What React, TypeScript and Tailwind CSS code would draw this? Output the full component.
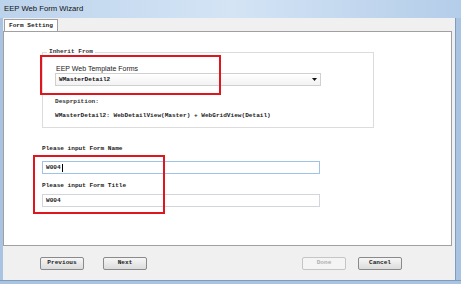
const mono = "font-['Liberation_Mono',monospace] font-bold"
const sans = "font-['Liberation_Sans',Arial,sans-serif]"

function WinButton({ label, disabled }: { label: string; disabled?: boolean }) {
  return (
    <button
      className={`h-[13px] w-[44px] rounded-[2px] border text-[6.1px] leading-none ${mono} ${
        disabled
          ? 'border-[#c5c5c5] bg-[#f4f4f4] text-[#b0b0b0]'
          : 'border-[#8a8a8a] bg-gradient-to-b from-[#f6f6f6] to-[#dcdcdc] text-[#222]'
      }`}
    >
      {label}
    </button>
  )
}

function TextBox({ value, focused }: { value: string; focused?: boolean }) {
  return (
    <div
      className={`ml-[38px] flex h-[13px] w-[278px] items-center border px-[3px] text-[6.1px] text-[#222] ${mono} ${
        focused ? 'border-[#9fc3e6]' : 'border-[#d2d6db]'
      }`}
    >
      {value}
      {focused && <span className="ml-[1px] h-[8px] w-px bg-black" />}
    </div>
  )
}

export default function App() {
  return (
    <div className="relative flex h-[284px] w-[461px] flex-col bg-[#a9c4e2]">
      {/* title bar */}
      <div className="flex h-[18px] items-center bg-gradient-to-r from-[#bcd3ec] via-[#d4e4f5] to-[#b4cde9] px-[4px]">
        <span className={`text-[7.7px] text-[#111] ${sans}`}>EEP Web Form Wizard</span>
      </div>

      <div className="ml-[3px] mr-[5px] flex flex-1 flex-col border-r border-[#7f9db9] bg-[#f0f0f0]">
        {/* tab strip */}
        <div className="flex h-[13px] items-end pl-[1px]">
          <div className={`flex h-[12px] w-[54px] items-center justify-center border border-b-0 border-[#a0a0a0] bg-white text-[6.1px] text-[#222] ${mono}`}>
            Form Setting
          </div>
        </div>

        {/* tab panel */}
        <div className="mr-[3px] flex h-[215px] flex-col border border-[#a0a0a0] bg-white">
          <fieldset className="ml-[38px] mt-[16px] h-[80px] w-[332px] border border-[#dcdcdc] p-0">
            <legend className={`ml-[4px] px-[2px] text-[6.1px] leading-[8px] text-[#333] ${mono}`}>Inherit From</legend>
            <div className="flex flex-col pl-[12px]">
              <div className={`mt-[9px] pl-[1px] text-[7px] leading-[8px] text-[#222] ${sans}`}>EEP Web Template Forms</div>
              <div className="flex h-[13px] w-[266px] items-center justify-between border border-[#d0d0d0] bg-gradient-to-b from-white to-[#f2f2f2] pl-[3px] pr-[3px]">
                <span className={`text-[6.1px] text-[#111] ${mono}`}>WMasterDetail2</span>
                <svg width="5" height="3" viewBox="0 0 5 3">
                  <path d="M0 0H5L2.5 3Z" fill="#111" />
                </svg>
              </div>
              <div className={`mt-[12px] text-[6.1px] leading-[8px] text-[#333] ${mono}`}>Desprpition:</div>
              <div className={`mt-[6px] text-[6.1px] leading-[8px] text-[#222] ${mono}`}>
                WMasterDetail2: WebDetailView(Master) + WebGridView(Detail)
              </div>
            </div>
          </fieldset>

          <div className={`ml-[38px] mt-[17px] text-[6.1px] leading-[8px] text-[#222] ${mono}`}>Please input Form Name</div>
          <div className="mt-[8px]">
            <TextBox value="W004" focused />
          </div>
          <div className={`ml-[38px] mt-[8px] text-[6.1px] leading-[8px] text-[#222] ${mono}`}>Please input Form Title</div>
          <div className="mt-[4px]">
            <TextBox value="W004" />
          </div>
        </div>

        {/* buttons */}
        <div className="flex pt-[11px]">
          <div className="ml-[37px] flex gap-[19px]">
            <WinButton label="Previous" />
            <WinButton label="Next" />
          </div>
          <div className="ml-[155px] flex gap-[12px]">
            <WinButton label="Done" disabled />
            <WinButton label="Cancel" />
          </div>
        </div>
      </div>
      <div className="h-[4px] border-t border-[#7f9db9]" />

      {/* annotation boxes */}
      <div className="absolute left-[40px] top-[55px] h-[40px] w-[181px] border-2 border-[#e0161e]" />
      <div className="absolute left-[33px] top-[155px] h-[59px] w-[132px] border-2 border-[#e0161e]" />
    </div>
  )
}
